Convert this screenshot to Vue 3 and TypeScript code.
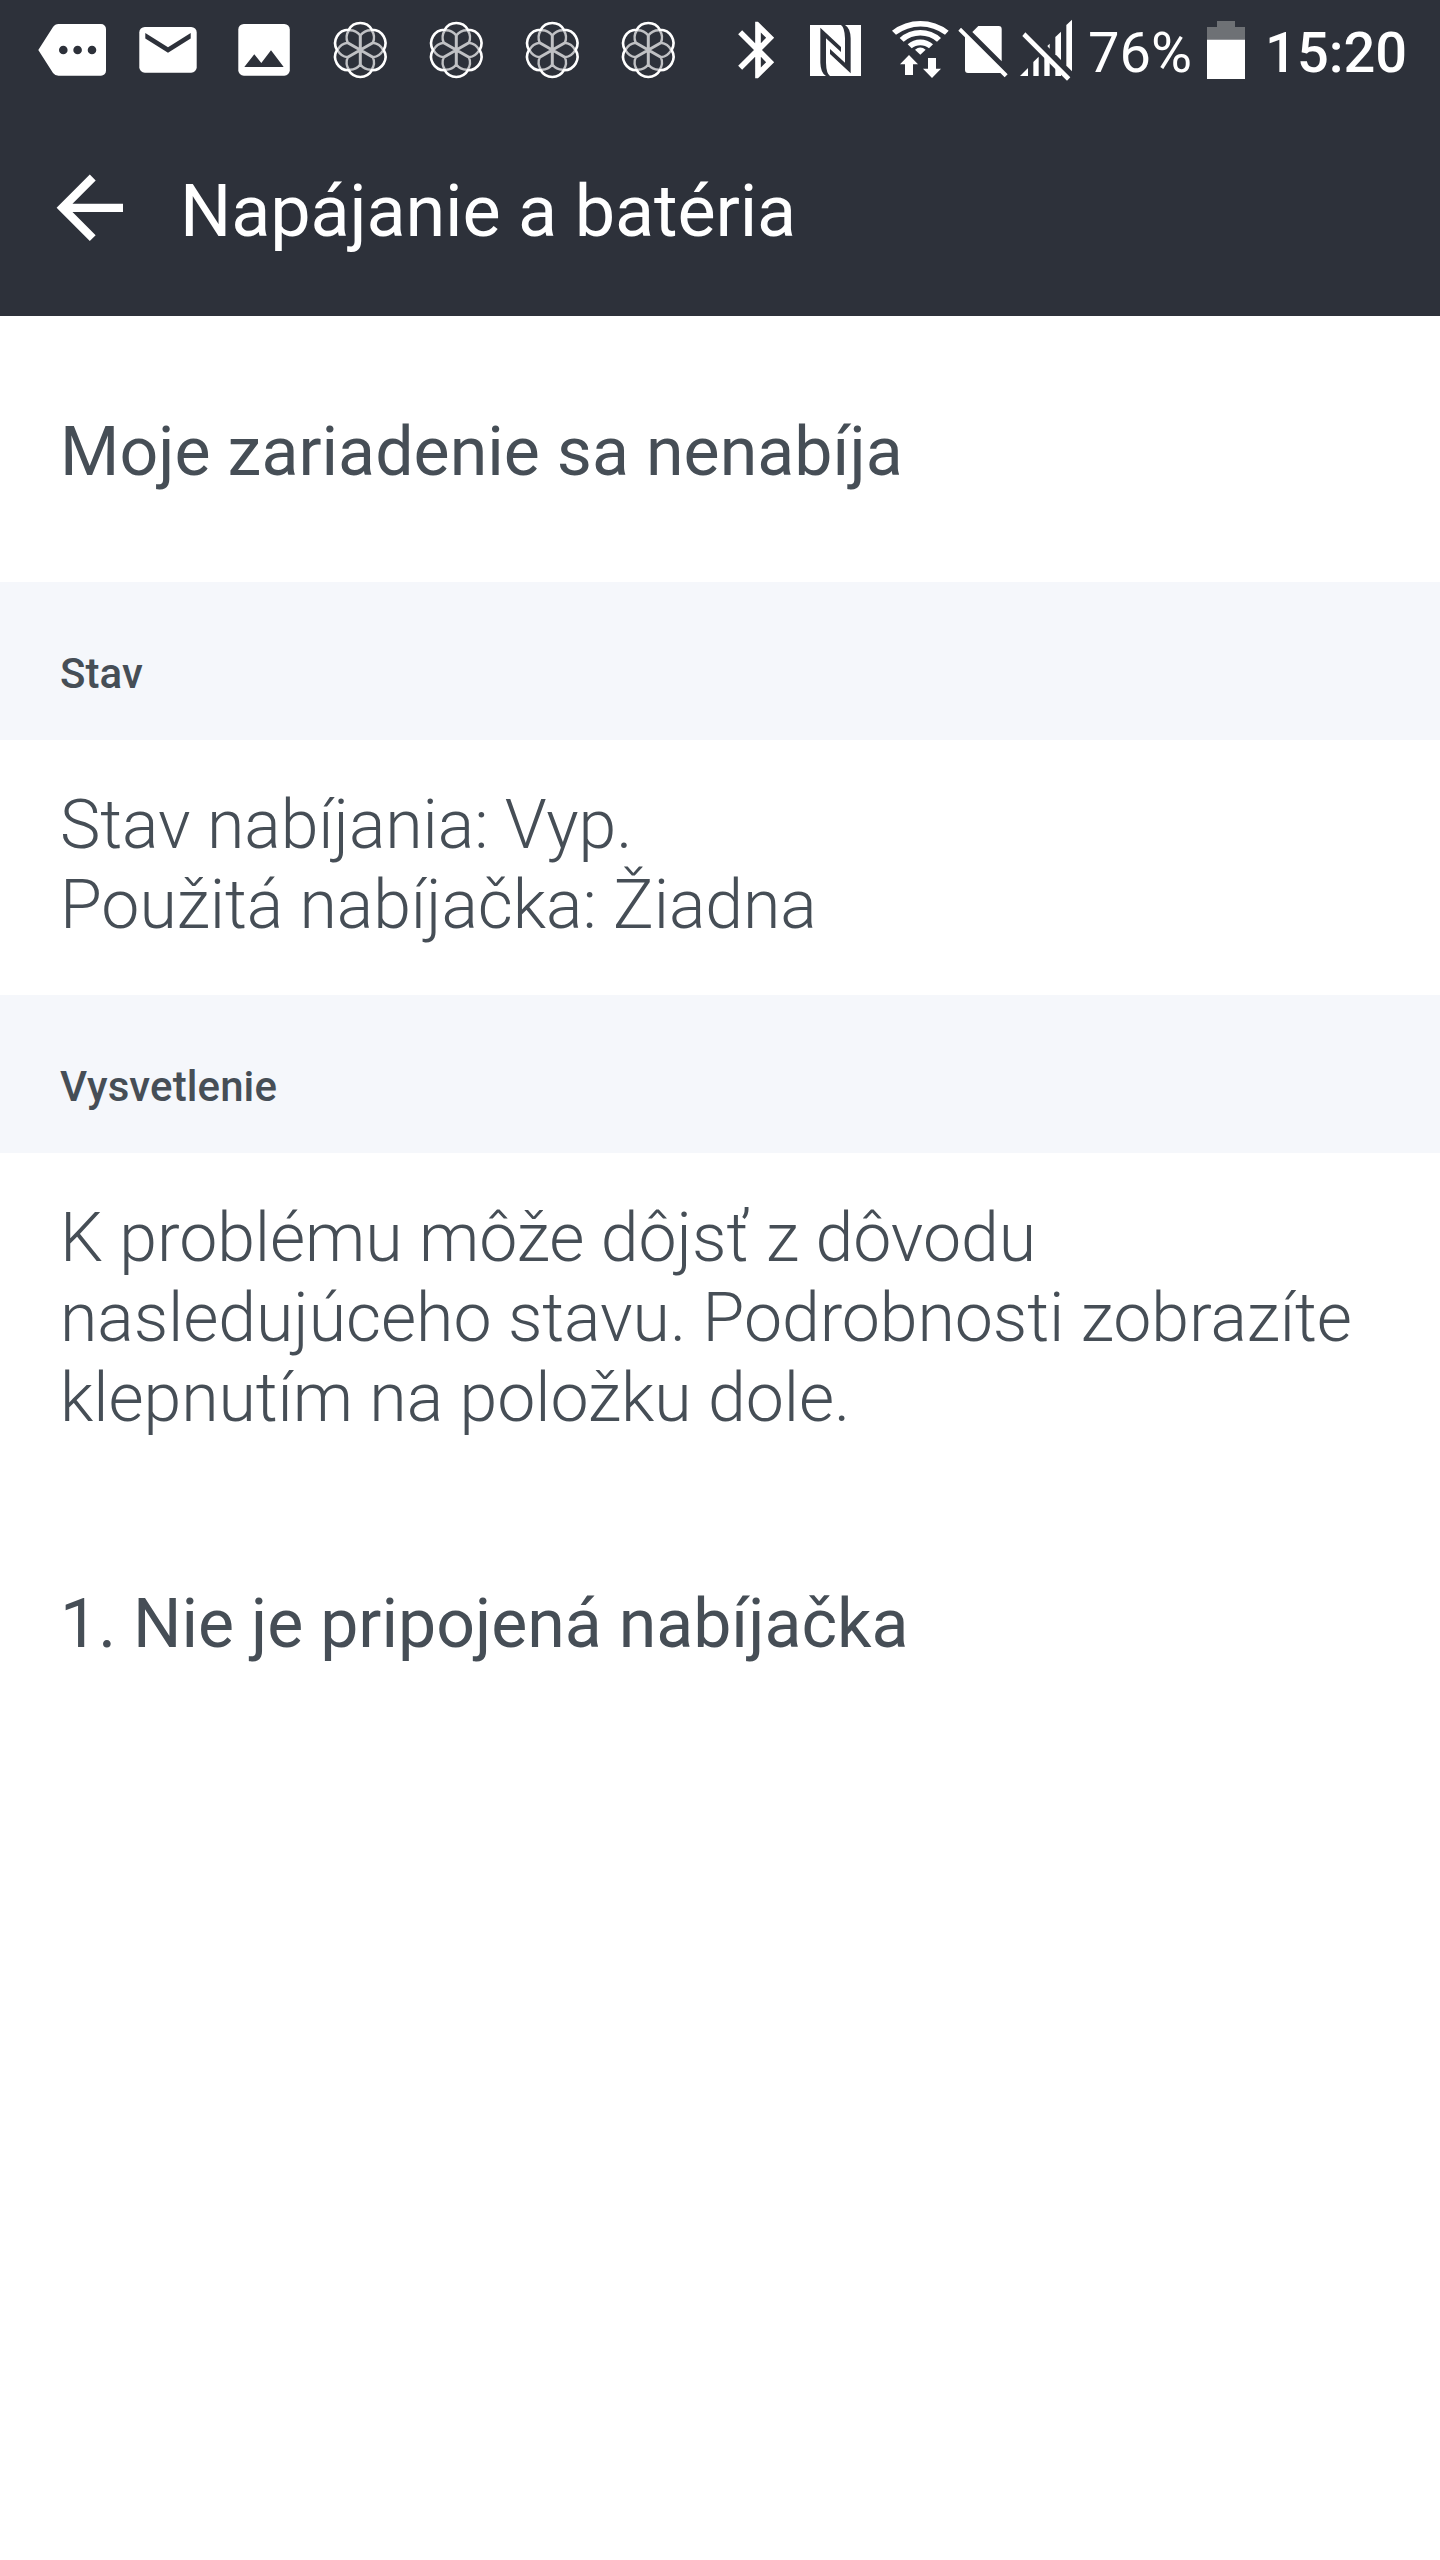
<script setup lang="ts">
const flowers: number[] = [1, 2, 3, 4]

const point = (deg: number, radius: number): string => {
  const a = (deg * Math.PI) / 180
  return `${(radius * Math.cos(a)).toFixed(2)} ${(-radius * Math.sin(a)).toFixed(2)}`
}

const rim =
  `M${point(0, 23.33)}` +
  [60, 120, 180, 240, 300, 360].map((deg) => `A13.4 13.4 0 0 0 ${point(deg, 23.33)}`).join('') +
  'Z'

const axes: number[] = [30, 90, 150, 210, 270, 330]
const spokes = axes.map((deg) => `M0 0L${point(deg, 14.6)}`).join('')
const arms = axes
  .map(
    (deg) =>
      `M${point(deg + 30, 22.8)}A13.4 13.4 0 0 1 ${point(deg, 14.6)}A13.4 13.4 0 0 1 ${point(deg - 30, 22.8)}`,
  )
  .join('')

const status: string[] = ['Stav nabíjania: Vyp.', 'Použitá nabíjačka: Žiadna']
const explanation: string[] = [
  'K problému môže dôjsť z dôvodu',
  'nasledujúceho stavu. Podrobnosti zobrazíte',
  'klepnutím na položku dole.',
]
</script>

<template>
  <div class="screen">
    <header class="top">
      <div class="statusbar">
        <svg class="cell" viewBox="24 2 96 96">
          <path
            fill="#fff"
            fill-rule="evenodd"
            d="M38.3 50L53 27Q55 24 58.5 24H101a5 5 0 0 1 5 5V70.7a5 5 0 0 1-5 5H58.5Q55 75.7 53 73ZM59 50a4.3 4.3 0 1 0 8.6 0a4.3 4.3 0 1 0-8.6 0ZM73.3 50a4.3 4.3 0 1 0 8.6 0a4.3 4.3 0 1 0-8.6 0ZM87.7 50a4.3 4.3 0 1 0 8.6 0a4.3 4.3 0 1 0-8.6 0Z"
          />
        </svg>
        <svg class="cell" viewBox="120 2 96 96">
          <rect x="139.3" y="27" width="57.4" height="45.7" rx="5.5" fill="#fff" />
          <path class="cut" d="M145.3 33L168 47.3L190.7 33V38.5L168 52.7L145.3 38.5Z" />
        </svg>
        <svg class="cell" viewBox="216 2 96 96">
          <rect x="238.3" y="24" width="51.5" height="51.7" rx="5.5" fill="#fff" />
          <path class="cut" d="M244.3 67L254.3 54.3L261.3 63L271 50.3L283.7 67Z" />
        </svg>
        <svg v-for="f in flowers" :key="f" class="cell" viewBox="-48.3 -48 96 96">
          <g fill="none" stroke="#c0c1c4">
            <path :d="arms" stroke-width="2.4" />
            <path :d="spokes" stroke-width="3" />
          </g>
          <path :d="rim" fill="none" stroke="#fff" stroke-width="2.6" />
        </svg>
        <svg class="bluetooth" viewBox="724.1 15 76 70">
          <path
            fill="#fff"
            transform="translate(724.1 16) scale(2.833)"
            d="M17.71 7.71L12 2h-1v7.59L6.41 5 5 6.41 10.59 12 5 17.59 6.41 19 11 14.41V22h1l5.71-5.71-4.3-4.29 4.3-4.29zM13 5.83l1.88 1.88L13 9.59V5.83zm1.88 10.46L13 18.17v-3.76l1.88 1.88z"
          />
        </svg>
        <svg class="square" viewBox="0 0 210 210">
          <rect x="30" y="30" width="153" height="153" fill="#fff" />
          <path class="cut" d="M61 38L123 96V111L78 70V143Q79 176 90 183H78Q62 174 61 143Z" />
          <path class="cut" d="M152 175L90 117V102L135 143V70Q134 37 123 30H135Q151 39 152 70Z" />
        </svg>
        <svg class="square wifi" viewBox="0 0 210 210">
          <g fill="#fff">
            <path d="M21 47A139 139 0 0 1 191 47L180 59A123 123 0 0 0 33 59Z" />
            <path d="M44 69A92 92 0 0 1 168 69L156 80A78 78 0 0 0 56 80Z" />
            <path d="M68 88A56 56 0 0 1 144 88L132 100A40 40 0 0 0 80 100Z" />
            <path d="M90 104A26 26 0 0 1 122 104L106 119Z" />
            <path d="M72 120L99 148H84V180H60V148H45Z" />
            <path d="M141 189L114 161H129V129H153V161H168Z" />
          </g>
        </svg>
        <svg class="signals" viewBox="0 0 360 210">
          <g fill="#fff">
            <path d="M70 33H131Q140 33 140 42V139L52 51Z" />
            <path d="M18 38L158 178L149 187L136 174H39Q30 174 30 165V67L10 47Z" />
            <path d="M211 52L346 187L336 197L202 63Z" />
            <path d="M195 183L219 159V183Z" />
            <path d="M235 141L251 125V183H235Z" />
            <path d="M268 126L284 142V183H268Z" />
            <path d="M277 93L284 86V101Z" />
            <path d="M301 159L318 176V183H301Z" />
            <path d="M301 66L318 50V135L301 118Z" />
            <path d="M334 30L351 14V169L334 152Z" />
          </g>
        </svg>
        <span class="percent">76%</span>
        <svg class="battery" viewBox="441 60 114 180">
          <path d="M471 63H525V81H555V119H441V81H471Z" fill="#6e7175" />
          <rect x="441" y="119" width="114" height="118" fill="#fff" />
        </svg>
        <span class="clock">15:20</span>
      </div>
      <div class="appbar">
        <svg class="back" viewBox="0 0 24 24">
          <path
            fill="#fff"
            d="M20 11H7.83l5.59-5.59L12 4l-8 8 8 8 1.41-1.41L7.83 13H20v-2z"
          />
        </svg>
        <h1 class="title">Napájanie a batéria</h1>
      </div>
    </header>
    <main>
      <div class="problem">Moje zariadenie sa nenabíja</div>
      <h2 class="band">Stav</h2>
      <div class="body state">
        <div v-for="line in status" :key="line">{{ line }}</div>
      </div>
      <h2 class="band">Vysvetlenie</h2>
      <div class="body explanation">
        <div v-for="line in explanation" :key="line">{{ line }}</div>
      </div>
      <div class="reason">1. Nie je pripojená nabíjačka</div>
    </main>
  </div>
</template>

<style>
body {
  margin: 0;
  background: #fff;
}
</style>

<style scoped>
.screen {
  width: 1440px;
  height: 2560px;
  overflow: hidden;
  background: #fff;
  color: #464e56;
  font-family: Roboto, 'Noto Sans', sans-serif;
  font-size: 68px;
  line-height: 80px;
}
.top {
  height: 316px;
  background: #2d313a;
  color: #fff;
}
.statusbar {
  display: flex;
  align-items: center;
  height: 100px;
  padding-left: 24px;
}
.statusbar svg,
.statusbar span {
  flex: none;
  display: block;
}
.cell {
  width: 96px;
  height: 96px;
}
.cut {
  fill: #2d313a;
}
.bluetooth {
  width: 76px;
  height: 70px;
  margin-left: 28.1px;
}
.square {
  width: 70px;
  height: 70px;
}
.wifi {
  margin-left: 15px;
}
.signals {
  width: 120px;
  height: 70px;
}
.percent {
  width: 119px;
  margin-left: 13px;
  padding-top: 6px;
  font-size: 56px;
  white-space: nowrap;
}
.battery {
  width: 38px;
  height: 60px;
}
.clock {
  margin-left: 20px;
  padding-top: 6px;
  font-size: 56px;
  font-weight: 500;
}
.appbar {
  display: flex;
  align-items: center;
  height: 216px;
  padding-left: 40.4px;
}
.back {
  width: 99.6px;
  height: 99.6px;
}
.title {
  margin: 0 0 0 40px;
  padding-top: 7px;
  font-size: 72px;
  font-weight: 400;
  letter-spacing: -0.17px;
}
.problem {
  height: 266px;
  padding: 96px 60px 0;
  box-sizing: border-box;
  letter-spacing: 0.05px;
}
.band {
  height: 158px;
  margin: 0;
  padding: 52px 60px 0;
  box-sizing: border-box;
  background: #f5f7fb;
  font-size: 42px;
  font-weight: 500;
  letter-spacing: 0.1px;
}
.body {
  padding: 0 60px;
  font-weight: 300;
  letter-spacing: -0.08px;
}
.state {
  height: 255px;
  box-sizing: border-box;
  padding-top: 45px;
}
.explanation {
  padding-top: 45px;
  white-space: nowrap;
}
.reason {
  padding: 146px 60px 0;
}
</style>
